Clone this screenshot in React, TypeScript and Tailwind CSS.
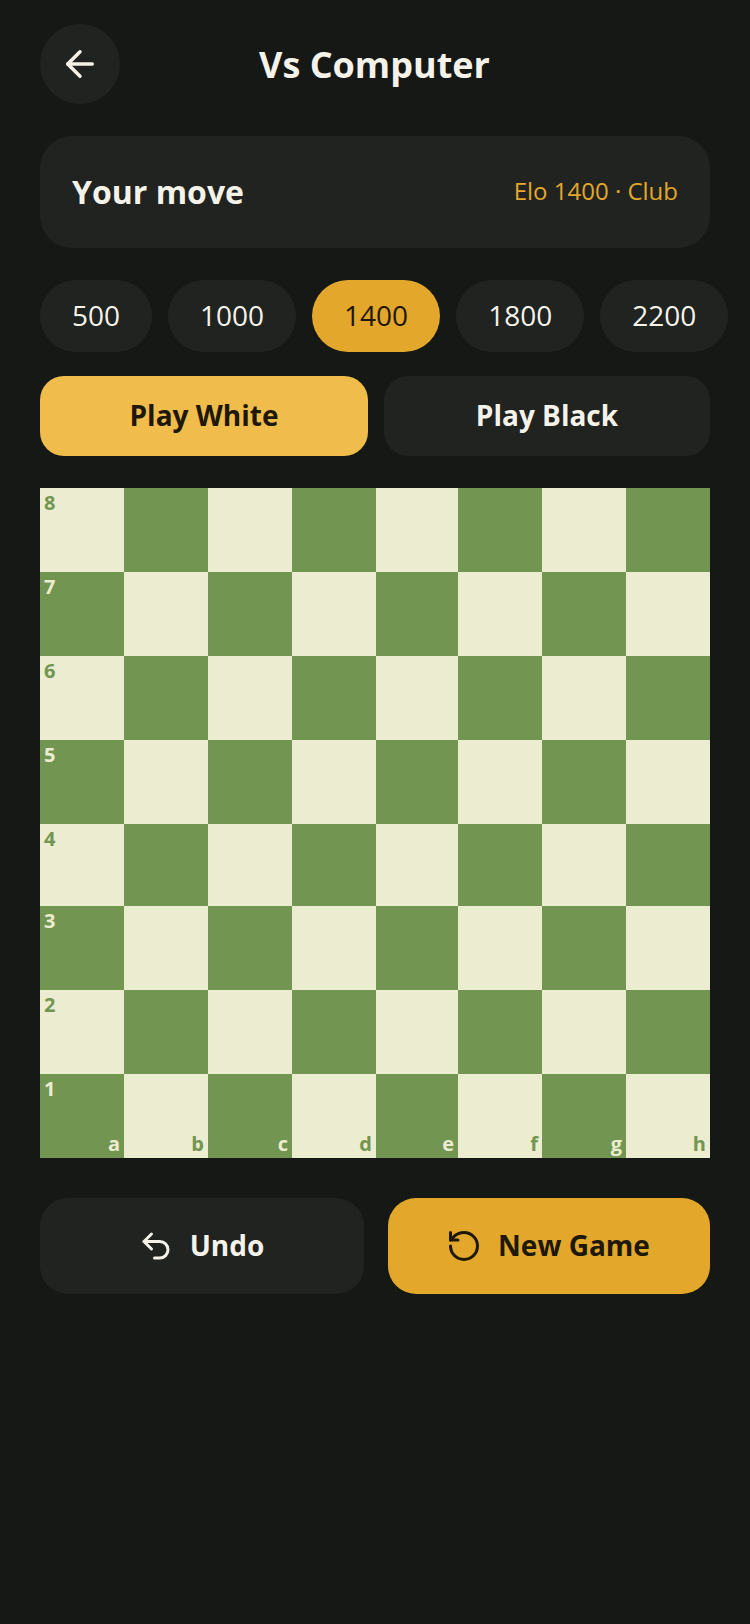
import { ArrowLeft, RotateCcw, Undo2 } from "lucide-react"

const levels = [500, 1000, 1400, 1800, 2200]
const ranks = [8, 7, 6, 5, 4, 3, 2, 1]
const files = ["a", "b", "c", "d", "e", "f", "g", "h"]

const Board = () => (
  <div className="mt-8 grid w-[670px] grid-cols-[84px_84px_84px_84px_82px_84px_84px_84px] grid-rows-[84px_84px_84px_84px_82px_84px_84px_84px]">
    {ranks.map((rank, r) =>
      files.map((file, f) => {
        const light = (r + f) % 2 === 0
        return (
          <div key={file + rank} className={`relative ${light ? "bg-[#ebecd0] text-[#739552]" : "bg-[#739552] text-[#ebecd0]"}`}>
            {f === 0 && <span className="absolute left-1 top-0.5 text-[20px] leading-[26px] font-bold">{rank}</span>}
            {r === 7 && <span className="absolute right-1 bottom-px text-[20px] leading-[27px] font-bold">{file}</span>}
          </div>
        )
      })
    )}
  </div>
)

export default function App() {
  return (
    <div className="min-h-[1624px] w-[750px] overflow-hidden bg-[#151814] px-10 pt-6 font-['Open_Sans',sans-serif] text-[#f5f2ea]">
      {/* header */}
      <div className="flex h-20 items-center">
        <button className="flex h-20 w-20 items-center justify-center rounded-full bg-[#20231f]">
          <ArrowLeft size={42} strokeWidth={2} />
        </button>
        <h1 className="ml-[139px] pt-0.5 text-[36px] leading-[48px] font-bold">Vs Computer</h1>
      </div>

      {/* status */}
      <div className="mt-8 flex h-28 items-center justify-between rounded-[32px] bg-[#20231f] px-8">
        <span className="text-[32px] leading-[44px] font-bold">Your move</span>
        <span className="pb-0.5 text-[24px] leading-[36px] text-[#e2a72b]">Elo 1400 · Club</span>
      </div>

      {/* elo levels */}
      <div className="mt-8 flex w-[688px] gap-4">
        {levels.map((lvl) => (
          <button
            key={lvl}
            className={`h-[72px] rounded-full px-8 pb-0.5 text-[28px] ${lvl === 1400 ? "bg-[#e2a72b] text-[#1d1808]" : "bg-[#20231f]"}`}
          >
            {lvl}
          </button>
        ))}
      </div>

      {/* side */}
      <div className="mt-6 flex gap-4">
        <button className="h-20 w-[328px] rounded-3xl bg-[#f0bc4b] pb-0.5 text-[28px] font-bold text-[#1d1808]">Play White</button>
        <button className="h-20 flex-1 rounded-3xl bg-[#20231f] pb-0.5 text-[28px] font-bold">Play Black</button>
      </div>

      <Board />

      {/* actions */}
      <div className="mt-10 flex gap-6">
        <button className="flex h-24 w-[324px] items-center justify-center gap-4 rounded-[28px] bg-[#20231f] pr-0.5 text-[28px] font-bold">
          <Undo2 size={36} strokeWidth={2} />
          <span className="pb-0.5">Undo</span>
        </button>
        <button className="flex h-24 flex-1 items-center justify-center gap-4 rounded-[28px] bg-[#e2a72b] pr-0.5 text-[28px] font-bold text-[#1d1808]">
          <RotateCcw size={36} strokeWidth={2} />
          <span className="pb-0.5">New Game</span>
        </button>
      </div>
    </div>
  )
}
